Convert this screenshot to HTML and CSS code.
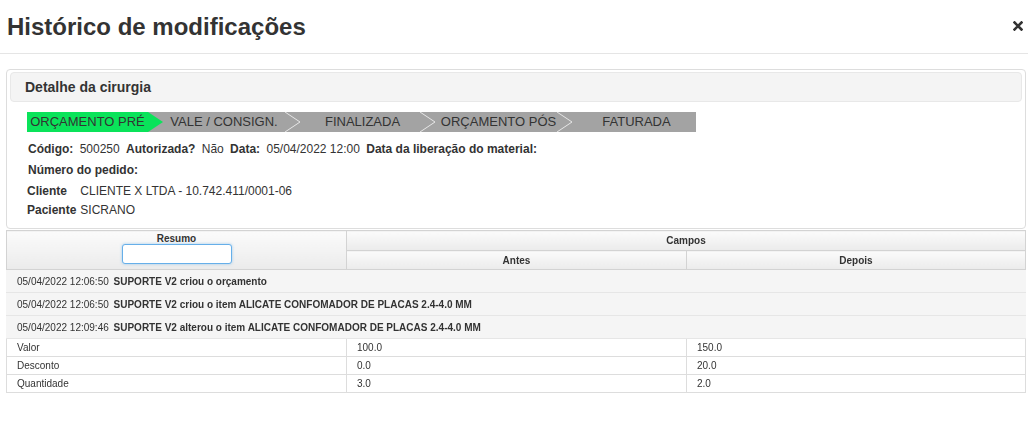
FILE: index.html
```html
<!DOCTYPE html>
<html lang="pt-BR">
<head>
    <meta charset="UTF-8">
    <meta name="viewport" content="width=device-width, initial-scale=1.0">
    <title>Histórico de modificações</title>
    <link rel="stylesheet" href="styles.css">
</head>
<body>
    <div class="modal-header">
        <h3 class="modal-title">Histórico de modificações</h3>
        <button type="button" class="close" aria-label="Fechar">
            <svg width="10" height="10" viewBox="0 0 10 10">
                <path d="M1.5 1.5 L8.5 8.5 M8.5 1.5 L1.5 8.5" stroke="#333" stroke-width="2.6" stroke-linecap="square"/>
            </svg>
        </button>
    </div>

    <div class="modal-body">
        <!-- Detalhe da cirurgia -->
        <div class="panel">
            <div class="panel-heading">Detalhe da cirurgia</div>
            <div class="panel-body">
                <div class="steps">
                    <div class="step active" style="width: 121px">ORÇAMENTO PRÉ</div>
                    <svg class="sep" width="15" height="20" viewBox="0 0 15 20">
                        <rect width="15" height="20" fill="#a3a3a3"/>
                        <path d="M0 0 L15 10 L0 20 Z" fill="#0ae35a"/>
                    </svg>
                    <div class="step" style="width: 122px">VALE / CONSIGN.</div>
                    <svg class="sep" width="15" height="20" viewBox="0 0 15 20">
                        <rect width="15" height="20" fill="#a3a3a3"/>
                        <path d="M0 0 L15 10 L0 20" fill="none" stroke="#e6e6e6" stroke-width="1"/>
                    </svg>
                    <div class="step shifted" style="width: 120px">FINALIZADA</div>
                    <svg class="sep" width="15" height="20" viewBox="0 0 15 20">
                        <rect width="15" height="20" fill="#a3a3a3"/>
                        <path d="M0 0 L15 10 L0 20" fill="none" stroke="#e6e6e6" stroke-width="1"/>
                    </svg>
                    <div class="step shifted" style="width: 122px">ORÇAMENTO PÓS</div>
                    <svg class="sep" width="15" height="20" viewBox="0 0 15 20">
                        <rect width="15" height="20" fill="#a3a3a3"/>
                        <path d="M0 0 L15 10 L0 20" fill="none" stroke="#e6e6e6" stroke-width="1"/>
                    </svg>
                    <div class="step shifted" style="width: 124px">FATURADA</div>
                </div>

                <div class="info-line first">
                    <span class="lbl">Código:</span>
                    <span class="val">500250</span>
                    <span class="lbl">Autorizada?</span>
                    <span class="val">Não</span>
                    <span class="lbl">Data:</span>
                    <span class="val">05/04/2022 12:00</span>
                    <span class="lbl">Data da liberação do material:</span>
                </div>
                <div class="info-line">
                    <span class="lbl">Número do pedido:</span>
                </div>
                <table class="info-table">
                    <tr>
                        <th>Cliente</th>
                        <td>CLIENTE X LTDA - 10.742.411/0001-06</td>
                    </tr>
                    <tr>
                        <th>Paciente</th>
                        <td>SICRANO</td>
                    </tr>
                </table>
            </div>
        </div>

        <!-- Grid de alterações -->
        <table class="grid">
            <colgroup>
                <col class="col-third">
                <col class="col-third">
                <col>
            </colgroup>
            <thead>
                <tr class="head-top">
                    <th rowspan="2" class="head-resumo">
                        <div>Resumo</div>
                        <input type="text" class="filter" autofocus>
                    </th>
                    <th colspan="2">Campos</th>
                </tr>
                <tr class="head-sub">
                    <th>Antes</th>
                    <th>Depois</th>
                </tr>
            </thead>
            <tbody>
                <tr class="group-row">
                    <td colspan="3"><span class="stamp">05/04/2022 12:06:50</span> <b>SUPORTE V2 criou o orçamento</b></td>
                </tr>
                <tr class="group-row">
                    <td colspan="3"><span class="stamp">05/04/2022 12:06:50</span> <b>SUPORTE V2 criou o item ALICATE CONFOMADOR DE PLACAS 2.4-4.0 MM</b></td>
                </tr>
                <tr class="group-row">
                    <td colspan="3"><span class="stamp">05/04/2022 12:09:46</span> <b>SUPORTE V2 alterou o item ALICATE CONFOMADOR DE PLACAS 2.4-4.0 MM</b></td>
                </tr>
                <tr class="detail-row">
                    <td>Valor</td>
                    <td>100.0</td>
                    <td>150.0</td>
                </tr>
                <tr class="detail-row">
                    <td>Desconto</td>
                    <td>0.0</td>
                    <td>20.0</td>
                </tr>
                <tr class="detail-row">
                    <td>Quantidade</td>
                    <td>3.0</td>
                    <td>2.0</td>
                </tr>
            </tbody>
        </table>
    </div>
</body>
</html>
```

FILE: styles.css
```css
body {
    font-family: "Liberation Sans", Arial, sans-serif;
    color: #333;
    background-color: #ffffff;
    margin: 0;
    padding: 0;
}

.modal-header {
    display: flex;
    align-items: center;
    justify-content: space-between;
    height: 53px;
    padding: 0 5px 0 7px;
    border-bottom: 1px solid #e5e5e5;
}

.modal-title {
    margin: 0;
    font-size: 24px;
    font-weight: bold;
    color: #333;
}

.close {
    display: flex;
    padding: 0;
    margin: 0 0 2px 0;
    border: none;
    background: none;
    cursor: pointer;
}

.modal-body {
    padding: 15px 2px 0 6px;
}

.panel {
    border: 1px solid #ddd;
    border-radius: 4px;
    padding: 2px 3px 0 3px;
}

.panel-heading {
    height: 28px;
    line-height: 28px;
    padding-left: 14px;
    font-size: 14px;
    font-weight: bold;
    background-color: #f4f4f4;
    border: 1px solid #e8e8e8;
    border-radius: 4px;
}

.panel-body {
    padding: 10px 0 9px 17px;
}

.steps {
    display: flex;
    height: 20px;
}

.step {
    box-sizing: border-box;
    height: 20px;
    line-height: 20px;
    text-align: center;
    font-size: 13px;
    color: #333;
    background-color: #a3a3a3;
    white-space: nowrap;
}

.step.shifted {
    padding-left: 5px;
}

.step.active {
    background-color: #0ae35a;
}

.sep {
    display: block;
    flex: none;
}

.info-line {
    height: 21px;
    line-height: 21px;
    font-size: 12px;
    padding-left: 1px;
}

.info-line.first {
    margin-top: 7px;
}

.lbl {
    font-weight: bold;
    margin-right: 3px;
}

.val {
    margin-right: 3px;
}

.info-table {
    border-collapse: collapse;
    font-size: 12px;
}

.info-table th {
    text-align: left;
    font-weight: bold;
    padding: 0 4px 0 0;
    width: 49px;
    height: 19px;
}

.info-table td {
    padding: 0;
    height: 19px;
}

.grid {
    width: 100%;
    margin-top: 1px;
    border-collapse: collapse;
    table-layout: fixed;
    font-size: 10px;
}

.col-third {
    width: 340px;
}

.grid thead th {
    font-weight: bold;
    color: #333;
    border: 1px solid #d3d3d3;
    background: linear-gradient(#fbfbfb, #ebebeb);
    padding: 0;
    text-align: center;
}

.head-top th {
    height: 19px;
}

.head-sub th {
    height: 18px;
}

.head-resumo {
    vertical-align: top;
}

.head-resumo div {
    height: 13px;
    line-height: 16px;
}

.filter {
    display: block;
    margin: 0 auto 4px;
    width: 110px;
    height: 20px;
    box-sizing: border-box;
    border: 1px solid #66afe9;
    border-radius: 3px;
    box-shadow: 0 0 3px rgba(102, 175, 233, 0.6);
    outline: none;
    font-size: 11px;
}

.group-row td {
    height: 22px;
    padding: 0 0 0 10px;
    background-color: #f5f5f5;
    border-bottom: 1px solid #e6e6e6;
    border-left: 1px solid #f5f5f5;
    white-space: nowrap;
}

.stamp {
    margin-right: 2px;
}

.detail-row td {
    height: 17px;
    padding: 0 0 0 10px;
    border: 1px solid #ddd;
    background-color: #ffffff;
}
```
